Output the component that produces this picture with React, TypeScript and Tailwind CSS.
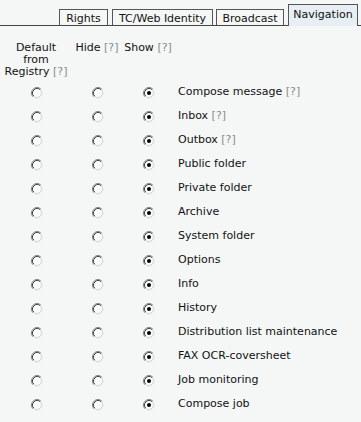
import React from "react";

const rows: { label: string; help?: boolean }[] = [
  { label: "Compose message", help: true },
  { label: "Inbox", help: true },
  { label: "Outbox", help: true },
  { label: "Public folder" },
  { label: "Private folder" },
  { label: "Archive" },
  { label: "System folder" },
  { label: "Options" },
  { label: "Info" },
  { label: "History" },
  { label: "Distribution list maintenance" },
  { label: "FAX OCR-coversheet" },
  { label: "Job monitoring" },
  { label: "Compose job" },
];

function Radio({ checked }: { checked?: boolean }) {
  return (
    <svg width="12" height="12" viewBox="0 0 12 12" className="block">
      <circle cx="6" cy="6" r="5" fill="#ffffff" />
      <path d="M2.11 9.89 A5.5 5.5 0 0 1 9.89 2.11" fill="none" stroke="#808080" strokeWidth="1" />
      <path d="M2.82 9.18 A4.5 4.5 0 0 1 9.18 2.82" fill="none" stroke="#404040" strokeWidth="1" />
      <path d="M9.89 2.11 A5.5 5.5 0 0 1 2.11 9.89" fill="none" stroke="#f0f0f0" strokeWidth="1" />
      <path d="M9.18 2.82 A4.5 4.5 0 0 1 2.82 9.18" fill="none" stroke="#d4d0c8" strokeWidth="1" />
      {checked && <circle cx="6" cy="6" r="2" fill="#000" />}
    </svg>
  );
}

function Help() {
  return <span className="text-[#8a8a8a]">[?]</span>;
}

export default function App() {
  return (
    <div className="w-[361px] h-[422px] overflow-hidden bg-[#f5f7f7] text-[11px] leading-[13px] text-[#111] font-['DejaVu_Sans',Verdana,sans-serif]">
      <div className="relative flex items-end h-[26px] border-b border-[#444]">
        <div className="w-[59px] shrink-0" />
        <div className="w-[49px] h-[16px] shrink-0 border border-b-0 border-[#555] flex items-center justify-center pt-[1px]">Rights</div>
        <div className="w-[4px] shrink-0" />
        <div className="w-[101px] h-[16px] shrink-0 border border-b-0 border-[#555] flex items-center justify-center pt-[1px]">TC/Web Identity</div>
        <div className="w-[3px] shrink-0" />
        <div className="w-[68px] h-[16px] shrink-0 border border-b-0 border-[#555] flex items-center justify-center pt-[1px]">Broadcast</div>
        <div className="w-[4px] shrink-0" />
        <div className="w-[70px] h-[22px] shrink-0 -mb-px border border-b-0 border-[#555] bg-[#e7eef4] flex items-center justify-center pb-[2px]">Navigation</div>
        <div className="w-[3px] shrink-0" />
        <div className="w-[20px] h-[14px] shrink-0 border border-b-0 border-[#555]" />
      </div>

      <div className="grid grid-cols-[72px_50px_52px_1fr] mt-[16px] leading-[12px]">
        <div className="text-center">
          Default
          <br />
          from
          <br />
          Registry <Help />
        </div>
        <div className="text-center whitespace-nowrap">
          Hide <Help />
        </div>
        <div className="text-center whitespace-nowrap">
          Show <Help />
        </div>
        <div />
      </div>

      <div className="mt-[3px] flex flex-col">
        {rows.map((r) => (
          <div key={r.label} className="grid grid-cols-[72px_50px_52px_1fr] h-[24px] items-center">
            <div className="flex justify-center pl-[2px]">
              <Radio />
            </div>
            <div className="flex justify-center pl-[2px]">
              <Radio />
            </div>
            <div className="flex justify-center pl-[1px]">
              <Radio checked />
            </div>
            <div className="pl-[4px] whitespace-nowrap -mt-[3px]">
              {r.label}
              {r.help && (
                <>
                  {" "}
                  <Help />
                </>
              )}
            </div>
          </div>
        ))}
      </div>
    </div>
  );
}
